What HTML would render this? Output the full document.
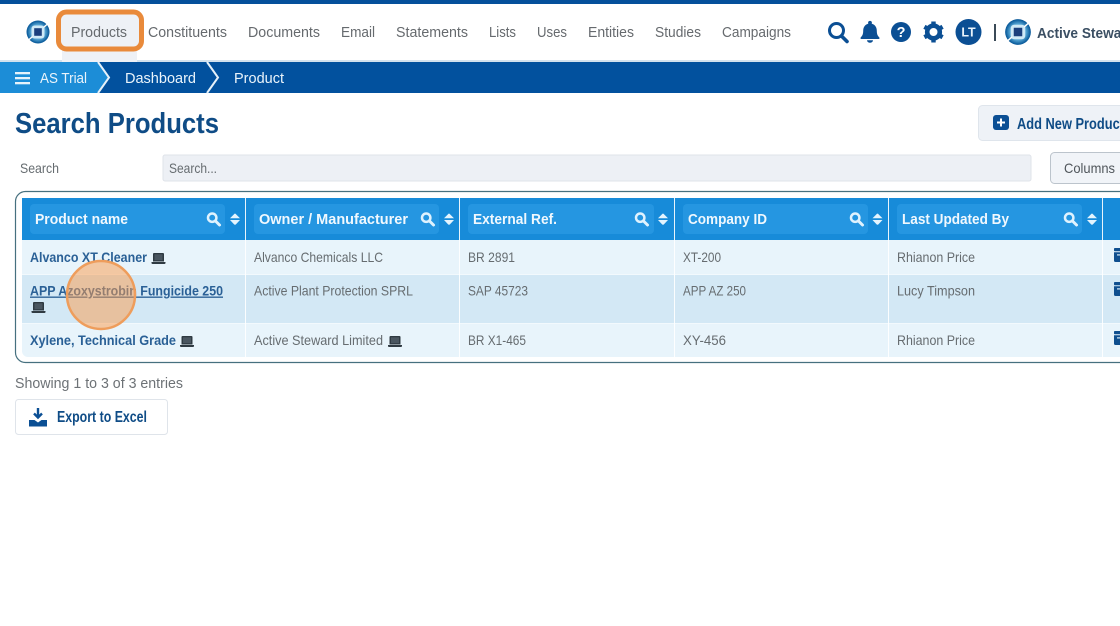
<!DOCTYPE html>
<html><head><meta charset="utf-8"><style>
html,body{margin:0;padding:0;background:#fff;overflow:hidden}
svg{display:block;font-family:"Liberation Sans",Arial,sans-serif}
.n{font-size:14.5px;fill:#666a6e}
.c{font-size:13.6px;fill:#666c70}
.h{font-size:14.5px;font-weight:bold;fill:#f0f8fe}
.l{font-size:13.6px;font-weight:bold;fill:#2a6096}
</style></head><body>
<svg width="1120" height="626" viewBox="0 0 1120 626" xmlns="http://www.w3.org/2000/svg">
<defs>
<radialGradient id="lg" cx=".5" cy=".5" r=".55"><stop offset="0" stop-color="#bfe2f4"/><stop offset=".55" stop-color="#5aa9d6"/><stop offset=".85" stop-color="#0f609f"/><stop offset="1" stop-color="#0a5291"/></radialGradient>
<g id="logo"><circle r="11.5" fill="url(#lg)"/><rect x="-6.500" y="-6.500" width="13" height="13" rx="3" fill="#cfe9f6"/><rect x="-3.800" y="-3.800" width="7.600" height="7.600" fill="#1b3f7d"/><path d="M-10 8.500L-5.500 4.500M5.500-4.500L10-8.500" stroke="#fff" stroke-width="1.300"/></g>
<g id="lap"><path d="M1.500 1a1 1 0 0 1 1-1h9a1 1 0 0 1 1 1v7.500h-11z" fill="#2f3a42"/><rect x="3" y="1.300" width="8" height="5.900" fill="#4a5660"/><path d="M0 9h14v1a1 1 0 0 1-1 1H1a1 1 0 0 1-1-1z" fill="#2f3a42"/></g>
<g id="mag" fill="none" stroke="#dff2fe"><circle cx="5.200" cy="5.200" r="4.200" stroke-width="2.500"/><path d="M8.500 8.500l4 4" stroke-linecap="round" stroke-width="3"/></g>
<g id="sort" fill="#e4f4fe"><path d="M0 5.300L4 1.200a1.200 1.200 0 0 1 2 0L10 5.300zM0 7h10L6 11.200a1.200 1.200 0 0 1-2 0z"/></g>
<g id="arch"><rect x="0" y="0" width="12" height="3.200" rx=".8" fill="#0f4f8f"/><path d="M0 4.300h12v9.700H1.500A1.500 1.500 0 0 1 0 12.500z" fill="#0f4f8f"/><rect x="3" y="6.300" width="6" height="1.200" fill="#d8ecf8"/></g>
</defs>

<rect width="1120" height="626" fill="#fff"/>
<rect width="1120" height="4" fill="#05509b"/>
<rect y="60" width="1120" height="2" fill="#d3e2ee"/>

<rect x="62" y="15" width="75" height="47" fill="#eef1f6"/>
<rect x="58.500" y="12" width="83" height="37" rx="8" fill="#eef1f6" stroke="#e98a3b" stroke-width="5"/>
<use href="#logo" x="38" y="32"/>

<g class="n">
<text x="71" y="37" textLength="56" lengthAdjust="spacingAndGlyphs">Products</text>
<text x="148" y="37" textLength="79" lengthAdjust="spacingAndGlyphs">Constituents</text>
<text x="248" y="37" textLength="72" lengthAdjust="spacingAndGlyphs">Documents</text>
<text x="341" y="37" textLength="34" lengthAdjust="spacingAndGlyphs">Email</text>
<text x="396" y="37" textLength="72" lengthAdjust="spacingAndGlyphs">Statements</text>
<text x="489" y="37" textLength="27" lengthAdjust="spacingAndGlyphs">Lists</text>
<text x="537" y="37" textLength="30" lengthAdjust="spacingAndGlyphs">Uses</text>
<text x="588" y="37" textLength="46" lengthAdjust="spacingAndGlyphs">Entities</text>
<text x="655" y="37" textLength="46" lengthAdjust="spacingAndGlyphs">Studies</text>
<text x="722" y="37" textLength="69" lengthAdjust="spacingAndGlyphs">Campaigns</text>
</g>

<!-- right icons -->
<g fill="none" stroke="#0b4f94"><circle cx="836.500" cy="30.500" r="7" stroke-width="3"/><path d="M841.500 36L847 41.500" stroke-width="3.600" stroke-linecap="round"/></g>
<path d="M870 23.500c4.300 0 6.800 3.200 6.800 7.300 0 4 1.200 5.300 2.500 6.700.5.600.2 1.500-.7 1.500h-17.200c-.9 0-1.200-.9-.7-1.500 1.300-1.400 2.500-2.700 2.500-6.700 0-4.100 2.500-7.300 6.800-7.300z" fill="#0b4f94"/><circle cx="870" cy="22.800" r="1.900" fill="#0b4f94"/><path d="M867 40.200h6a3 2.600 0 0 1-6 0z" fill="#0b4f94"/>
<circle cx="901" cy="32" r="10" fill="#0b4f94"/>
<text x="901" y="37" text-anchor="middle" font-size="14.500" font-weight="bold" fill="#fff">?</text>
<g transform="translate(933.500 32)"><circle r="6.300" fill="none" stroke="#0b4f94" stroke-width="4.600"/><g stroke="#0b4f94" stroke-width="4.400"><path d="M0-10.500V-7M0 10.500V7M-9.100-5.200L-6-3.500M9.100 5.200L6 3.500M-9.100 5.200L-6 3.500M9.100-5.200L6-3.500"/></g></g>
<circle cx="968.500" cy="32" r="13" fill="#0b4f94"/>
<text x="968.500" y="36.500" text-anchor="middle" font-size="12.500" font-weight="bold" fill="#e8f3fb">LT</text>
<rect x="994" y="24" width="2" height="17" fill="#3b4a57"/>
<use href="#logo" transform="translate(1018 32) scale(1.120)"/>
<text x="1037" y="38" font-size="14.500" font-weight="bold" fill="#3b4f63" textLength="98" lengthAdjust="spacingAndGlyphs">Active Steward</text>

<!-- breadcrumb -->
<rect y="62" width="1120" height="31" fill="#02519e"/>
<path d="M0 62H98L109 77.500 98 93H0z" fill="#1c8dd7"/>
<path d="M98 62L109 77.500 98 93M207 62L218 77.500 207 93" fill="none" stroke="#e6f1f9" stroke-width="2"/>
<g fill="#e6f3fb"><rect x="15" y="72" width="15" height="2.300"/><rect x="15" y="77" width="15" height="2.300"/><rect x="15" y="82" width="15" height="2.300"/></g>
<g font-size="14.500" fill="#eaf4fb">
<text x="40" y="83" textLength="47" lengthAdjust="spacingAndGlyphs">AS Trial</text>
<text x="125" y="83" textLength="71" lengthAdjust="spacingAndGlyphs">Dashboard</text>
<text x="234" y="83" textLength="50" lengthAdjust="spacingAndGlyphs">Product</text>
</g>

<text x="15" y="133" font-size="29" font-weight="bold" fill="#0f4c86" textLength="204" lengthAdjust="spacingAndGlyphs">Search Products</text>

<rect x="978.500" y="105.500" width="160" height="35" rx="4" fill="#eef2f7" stroke="#dfe5ec"/>
<rect x="993" y="115" width="16" height="15" rx="3" fill="#0b4f94"/>
<path d="M1001 118.500v8M997 122.500h8" stroke="#fff" stroke-width="2"/>
<text x="1017" y="129" font-size="15.500" font-weight="bold" fill="#0f4c86" textLength="107" lengthAdjust="spacingAndGlyphs">Add New Product</text>

<text x="20" y="173" class="c" textLength="39" lengthAdjust="spacingAndGlyphs">Search</text>
<rect x="163" y="155" width="868" height="26" rx="2" fill="#edf0f5" stroke="#dfe3e9"/>
<text x="169" y="173" class="c" textLength="48" lengthAdjust="spacingAndGlyphs">Search...</text>
<rect x="1050.500" y="152.500" width="100" height="31" rx="4" fill="#f1f4f8" stroke="#bcc4cc"/>
<text x="1064" y="173" font-size="13.600" fill="#50565b" textLength="51" lengthAdjust="spacingAndGlyphs">Columns</text>

<!-- table -->
<rect x="15.500" y="191.500" width="1130" height="171" rx="10" fill="#fff" stroke="#46707f" stroke-width="1.200"/>
<rect x="22" y="198" width="1100" height="42" fill="#178bd9"/>
<path d="M22 240H1120V274H22z" fill="#e8f4fb"/>
<rect x="22" y="274" width="1098" height="49" fill="#d3e8f5"/>
<path d="M22 323H1120V357H28a6 6 0 0 1-6-6z" fill="#e8f4fb"/>
<rect x="22" y="274" width="1098" height="1" fill="#f2f9fd"/>
<rect x="22" y="323" width="1098" height="1" fill="#f2f9fd"/>
<g fill="#fff" opacity=".9"><rect x="245" y="198" width="1" height="159"/><rect x="459" y="198" width="1" height="159"/><rect x="674" y="198" width="1" height="159"/><rect x="888" y="198" width="1" height="159"/><rect x="1102" y="198" width="1" height="159"/></g>

<g fill="#2596e1">
<rect x="30" y="204" width="195" height="30" rx="4"/>
<rect x="254" y="204" width="185" height="30" rx="4"/>
<rect x="468" y="204" width="186" height="30" rx="4"/>
<rect x="683" y="204" width="185" height="30" rx="4"/>
<rect x="897" y="204" width="185" height="30" rx="4"/>
</g>
<g class="h">
<text x="35" y="224" textLength="93" lengthAdjust="spacingAndGlyphs">Product name</text>
<text x="259" y="224" textLength="149" lengthAdjust="spacingAndGlyphs">Owner / Manufacturer</text>
<text x="473" y="224" textLength="84" lengthAdjust="spacingAndGlyphs">External Ref.</text>
<text x="688" y="224" textLength="79" lengthAdjust="spacingAndGlyphs">Company ID</text>
<text x="902" y="224" textLength="107" lengthAdjust="spacingAndGlyphs">Last Updated By</text>
</g>
<use href="#mag" x="207" y="212.500"/><use href="#sort" x="230" y="213"/>
<use href="#mag" x="421" y="212.500"/><use href="#sort" x="444" y="213"/>
<use href="#mag" x="635" y="212.500"/><use href="#sort" x="658" y="213"/>
<use href="#mag" x="850" y="212.500"/><use href="#sort" x="872.500" y="213"/>
<use href="#mag" x="1064" y="212.500"/><use href="#sort" x="1087" y="213"/>

<g class="l">
<text x="30" y="262" textLength="117" lengthAdjust="spacingAndGlyphs">Alvanco XT Cleaner</text>
<text x="30" y="295.500" textLength="193" lengthAdjust="spacingAndGlyphs" text-decoration="underline">APP Azoxystrobin Fungicide 250</text>
<text x="30" y="345" textLength="146" lengthAdjust="spacingAndGlyphs">Xylene, Technical Grade</text>
</g>
<use href="#lap" x="151.500" y="253"/><use href="#lap" x="31.500" y="302"/><use href="#lap" x="180" y="336"/><use href="#lap" x="388" y="336"/>

<g class="c">
<text x="254" y="262" textLength="129" lengthAdjust="spacingAndGlyphs">Alvanco Chemicals LLC</text>
<text x="254" y="295.500" textLength="159" lengthAdjust="spacingAndGlyphs">Active Plant Protection SPRL</text>
<text x="254" y="345" textLength="129" lengthAdjust="spacingAndGlyphs">Active Steward Limited</text>
<text x="468" y="262" textLength="47" lengthAdjust="spacingAndGlyphs">BR 2891</text>
<text x="468" y="295.500" textLength="60" lengthAdjust="spacingAndGlyphs">SAP 45723</text>
<text x="468" y="345" textLength="58" lengthAdjust="spacingAndGlyphs">BR X1-465</text>
<text x="683" y="262" textLength="38" lengthAdjust="spacingAndGlyphs">XT-200</text>
<text x="683" y="295.500" textLength="63" lengthAdjust="spacingAndGlyphs">APP AZ 250</text>
<text x="683" y="345" textLength="43" lengthAdjust="spacingAndGlyphs">XY-456</text>
<text x="897" y="262" textLength="78" lengthAdjust="spacingAndGlyphs">Rhianon Price</text>
<text x="897" y="295.500" textLength="78" lengthAdjust="spacingAndGlyphs">Lucy Timpson</text>
<text x="897" y="345" textLength="78" lengthAdjust="spacingAndGlyphs">Rhianon Price</text>
</g>
<use href="#arch" x="1114" y="248"/><use href="#arch" x="1114" y="282"/><use href="#arch" x="1114" y="331"/>

<circle cx="101" cy="295" r="34" fill="#fb9a4a" fill-opacity=".5" stroke="#ee9d5c" stroke-width="2.500"/>

<text x="15" y="388" font-size="14.500" fill="#6d7276" textLength="168" lengthAdjust="spacingAndGlyphs">Showing 1 to 3 of 3 entries</text>
<rect x="15.500" y="399.500" width="152" height="35" rx="3" fill="#fff" stroke="#dfe4ea"/>
<path d="M38 408v9M34 413.500l4 4 4-4" fill="none" stroke="#0b4f94" stroke-width="2.400"/>
<path d="M29 420h5.500l3.500 2.500 3.500-2.500H47v6.500H29z" fill="#0b4f94"/>
<text x="57" y="422" font-size="15.500" font-weight="bold" fill="#0f4c86" textLength="90" lengthAdjust="spacingAndGlyphs">Export to Excel</text>
</svg>
</body></html>
